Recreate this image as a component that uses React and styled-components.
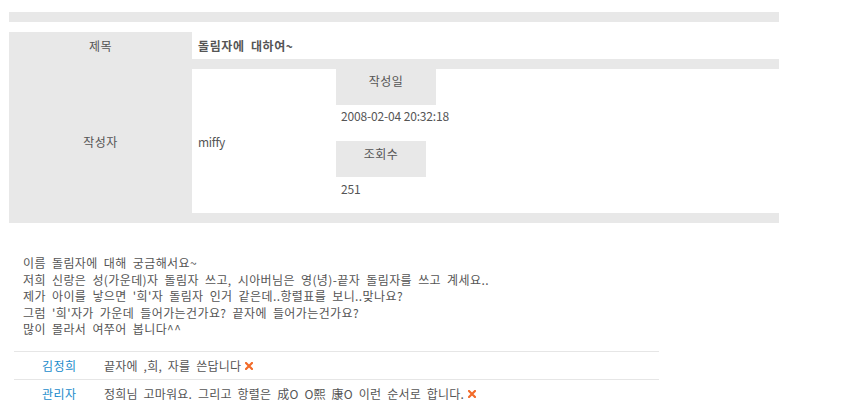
import React from 'react';
import styled, { createGlobalStyle } from 'styled-components';

const GlobalStyle = createGlobalStyle`
  body {
    margin: 0;
    background: #fff;
    font-family: 'Noto Sans CJK KR', 'Noto Sans', sans-serif;
    font-size: 12px;
    color: #555;
  }
`;

const comments = [
  { id: 1, name: '김정희', text: '끝자에 ,희, 자를 쓴답니다' },
  { id: 2, name: '관리자', text: '정희님 고마워요. 그리고 항렬은 成O O熙 康O 이런 순서로 합니다.' },
];

const bodyLines = [
  '이름 돌림자에 대해 궁금해서요~',
  '저희 신랑은 성(가운데)자 돌림자 쓰고, 시아버님은 영(녕)-끝자 돌림자를 쓰고 계세요..',
  "제가 아이를 낳으면 '희'자 돌림자 인거 같은데..항렬표를 보니..맞나요?",
  "그럼 '희'자가 가운데 들어가는건가요? 끝자에 들어가는건가요?",
  '많이 몰라서 여쭈어 봅니다^^',
];

const DeleteIcon = () => (
  <XMark viewBox="0 0 8 8" width="8" height="8">
    <path d="M1 1 L7 7 M7 1 L1 7" stroke="#f26b2a" strokeWidth="2.2" strokeLinecap="square" />
  </XMark>
);

export default function App() {
  return (
    <Page>
      <GlobalStyle />
      <TopBar />
      <InfoTable>
        <Label>제목</Label>
        <TitleCell>돌림자에 대하여~</TitleCell>
        <Label>작성자</Label>
        <DetailCell>
          <Writer>miffy</Writer>
          <Meta>
            <MetaHead $w={100} $pt={5}>작성일</MetaHead>
            <MetaValue $h={22}>2008-02-04 20:32:18</MetaValue>
            <MetaHead $w={90} $pt={6} $mt={14}>조회수</MetaHead>
            <MetaValue $h={24}>251</MetaValue>
          </Meta>
        </DetailCell>
      </InfoTable>
      <Body>
        {bodyLines.map((line, i) => (
          <div key={i}>{line}</div>
        ))}
      </Body>
      <CommentList>
        {comments.map((c) => (
          <CommentRow key={c.id}>
            <Name>{c.name}</Name>
            <CommentText>
              {c.text}
              <DeleteIcon />
            </CommentText>
          </CommentRow>
        ))}
      </CommentList>
    </Page>
  );
}

const Page = styled.div`
  padding: 12px 0 0 9px;
`;

const TopBar = styled.div`
  width: 770px;
  height: 10px;
  background-color: #e8e8e8;
`;

const InfoTable = styled.div`
  margin-top: 10px;
  width: 770px;
  display: grid;
  grid-template-columns: 183px 1fr;
  grid-template-rows: 27px 144px;
  row-gap: 10px;
  padding-bottom: 10px;
  background-color: #e8e8e8;
`;

const Label = styled.div`
  display: flex;
  align-items: center;
  justify-content: center;
  letter-spacing: 0.5px;
  color: #555;
`;

const TitleCell = styled.div`
  display: flex;
  align-items: center;
  padding-left: 6px;
  background-color: #fff;
  font-weight: bold;
  letter-spacing: 0.6px;
  word-spacing: 3px;
  color: #555;
`;

const DetailCell = styled.div`
  display: flex;
  background-color: #fff;
`;

const Writer = styled.div`
  width: 138px;
  padding-left: 6px;
  display: flex;
  align-items: center;
  letter-spacing: -0.3px;
`;

const Meta = styled.div`
  display: flex;
  flex-direction: column;
  align-items: flex-start;
`;

const MetaHead = styled.div`
  width: ${(p) => p.$w}px;
  height: 36px;
  box-sizing: border-box;
  padding-top: ${(p) => p.$pt}px;
  margin-top: ${(p) => p.$mt || 0}px;
  line-height: 14px;
  text-align: center;
  letter-spacing: 0.5px;
  background-color: #e8e8e8;
`;

const MetaValue = styled.div`
  height: ${(p) => p.$h}px;
  line-height: ${(p) => p.$h}px;
  padding-left: 5px;
  letter-spacing: -0.15px;
`;

const Body = styled.div`
  margin-top: 32px;
  padding-left: 14px;
  line-height: 16.5px;
  letter-spacing: 0.4px;
  word-spacing: 3px;
`;

const CommentList = styled.div`
  margin-top: 13px;
  margin-left: 5px;
  width: 645px;
`;

const CommentRow = styled.div`
  display: flex;
  align-items: center;
  height: 28px;
  box-sizing: border-box;
  border-top: 1px solid #e6e6e6;
  letter-spacing: 0.2px;
  word-spacing: 3px;
`;

const Name = styled.div`
  width: 62px;
  padding-left: 28px;
  letter-spacing: 0.5px;
  color: #1a8ccb;
`;

const CommentText = styled.div`
  display: flex;
  align-items: center;
  gap: 4px;
`;

const XMark = styled.svg`
  flex-shrink: 0;
  margin-top: 1px;
`;
